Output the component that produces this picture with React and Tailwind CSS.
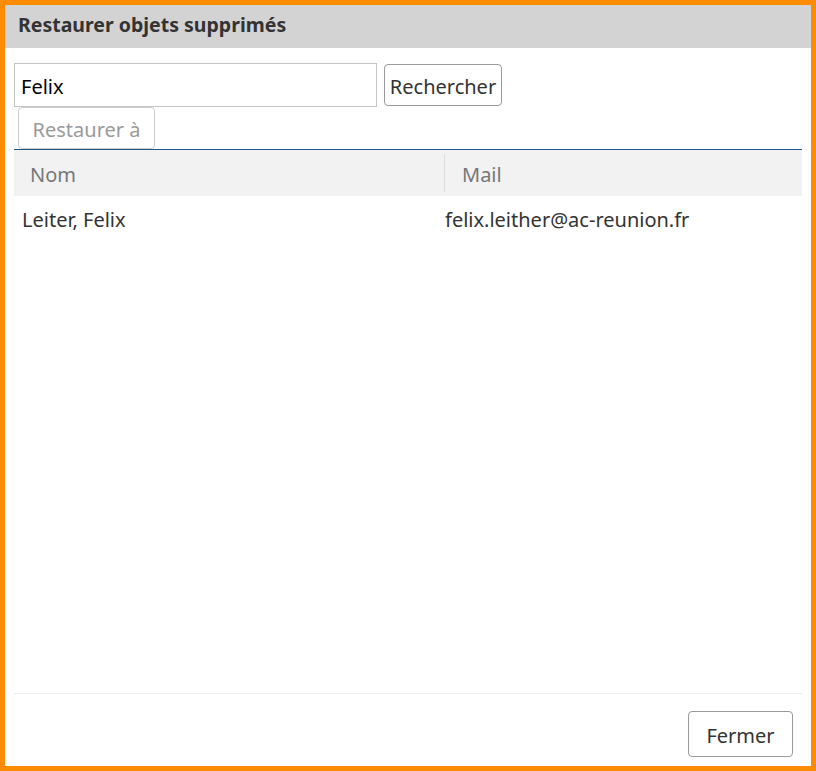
import React from "react";

export default function App() {
  return (
    <div
      className="w-[816px] h-[771px] border-[5px] border-[#ff8c00] bg-white flex flex-col"
      style={{ fontFamily: '"Noto Sans", "Open Sans", sans-serif' }}
    >
      <div className="h-[43px] shrink-0 bg-[#d3d3d3] pl-[13px] pb-[4px] flex items-center">
        <span className="text-[19.5px] font-bold text-[#333333]">Restaurer objets supprimés</span>
      </div>
      <div className="flex-1 flex flex-col px-[9px]">
        <div className="pt-[15px] flex items-center gap-[7px]">
          <div className="w-[363px] h-[44px] border border-[#c4c4c4] flex items-center pl-[6px] pt-[3px] text-[20px] text-black">
            Felix
          </div>
          <button className="w-[118px] h-[42px] border border-[#9a9a9a] rounded-[4px] pt-[3px] text-[20px] text-[#333333] bg-white">
            Rechercher
          </button>
        </div>
        <div className="pl-[4px]">
          <button className="w-[137px] h-[42px] border border-[#cfcfcf] rounded-[4px] pt-[3px] text-[20px] text-[#9a9a9a] bg-white">
            Restaurer à
          </button>
        </div>
        <div className="border-t border-[#1d5a87]">
          <div className="h-[46px] bg-[#f2f2f2] flex items-center text-[20px] text-[#777777]">
            <div className="w-[430px] pl-[16px] pt-[3px]">Nom</div>
            <div className="h-[38px] w-px bg-[#dddddd]"></div>
            <div className="pl-[17px] pt-[3px]">Mail</div>
          </div>
          <div className="h-[48px] flex items-center text-[20px] text-[#333333]">
            <div className="w-[431px] pl-[8px]">Leiter, Felix</div>
            <div>felix.leither@ac-reunion.fr</div>
          </div>
        </div>
        <div className="flex-1"></div>
        <div className="border-t border-[#eeeeee] pt-[17px] pb-[9px] pr-[9px] flex justify-end">
          <button className="w-[105px] h-[46px] border border-[#9a9a9a] rounded-[4px] pt-[3px] text-[20px] text-[#333333] bg-white">
            Fermer
          </button>
        </div>
      </div>
    </div>
  );
}
